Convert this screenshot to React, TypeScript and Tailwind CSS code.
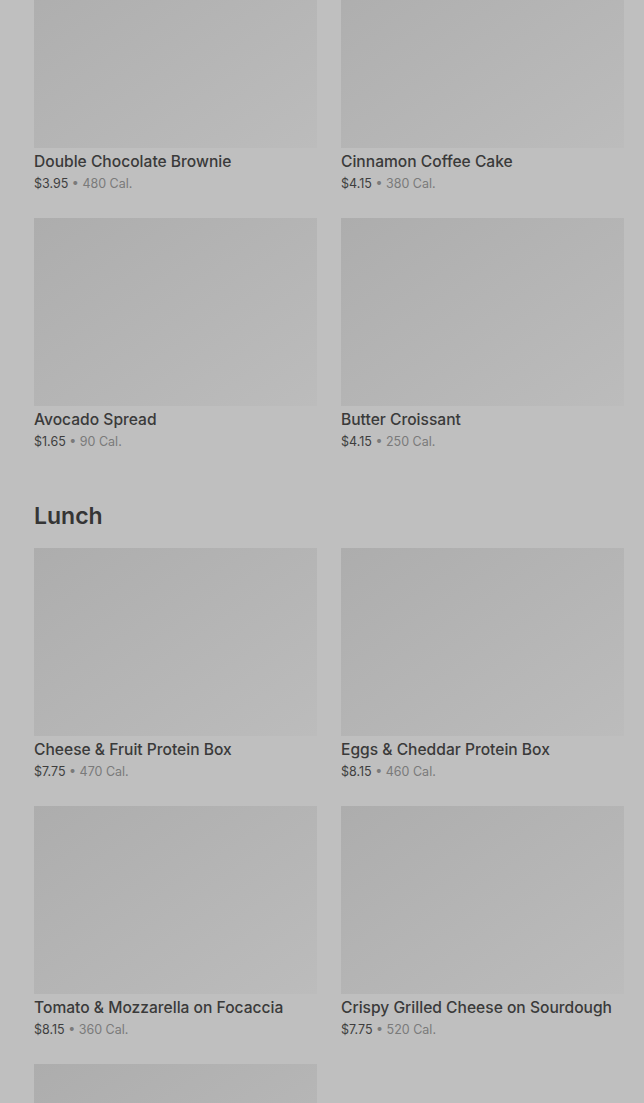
const breakfast = [
  { name: "Double Chocolate Brownie", price: "$3.95", cal: "480 Cal." },
  { name: "Cinnamon Coffee Cake", price: "$4.15", cal: "380 Cal." },
  { name: "Avocado Spread", price: "$1.65", cal: "90 Cal." },
  { name: "Butter Croissant", price: "$4.15", cal: "250 Cal." },
]

const lunch = [
  { name: "Cheese & Fruit Protein Box", price: "$7.75", cal: "470 Cal." },
  { name: "Eggs & Cheddar Protein Box", price: "$8.15", cal: "460 Cal." },
  { name: "Tomato & Mozzarella on Focaccia", price: "$8.15", cal: "360 Cal." },
  { name: "Crispy Grilled Cheese on Sourdough", price: "$7.75", cal: "520 Cal." },
  { name: "", price: "", cal: "" },
]

type Item = { name: string; price: string; cal: string }

function MenuCard({ item }: { item: Item }) {
  return (
    <div className="flex flex-col">
      <div className="h-[188px] bg-gradient-to-br from-[#adadad] to-[#bcbcbc]" />
      {item.name && (
        <>
          <div className="mt-[2px] text-[15.6px] leading-6 font-medium text-[#3a3a3a]">{item.name}</div>
          <div className="text-[12.5px] leading-5 text-[#3e3e3e]">
            {item.price}
            <span className="text-[#7a7a7a]"> • {item.cal}</span>
          </div>
        </>
      )}
    </div>
  )
}

export default function App() {
  return (
    <div
      className="h-[1103px] overflow-hidden bg-[#bfbfbf] pl-[34px] pr-[20px]"
      style={{ fontFamily: "Inter, 'Noto Sans', sans-serif" }}
    >
      <div className="-mt-[40px] flex flex-col">
        {/* Breakfast (scrolled) */}
        <div className="grid grid-cols-2 gap-x-6 gap-y-6">
          {breakfast.map((item) => (
            <MenuCard key={item.name} item={item} />
          ))}
        </div>

        {/* Lunch */}
        <h2 className="mt-12 mb-4 text-[23px] leading-8 font-semibold text-[#353535]">Lunch</h2>
        <div className="grid grid-cols-2 gap-x-6 gap-y-6">
          {lunch.map((item, i) => (
            <MenuCard key={i} item={item} />
          ))}
        </div>
      </div>
    </div>
  )
}
